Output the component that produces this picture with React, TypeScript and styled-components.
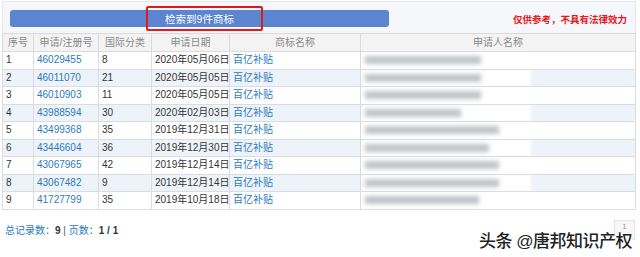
import { createGlobalStyle, styled } from "styled-components";

const GlobalStyle = createGlobalStyle`
  body {
    margin: 0;
    background: #fff;
    font-family: "Liberation Sans", "Noto Sans CJK SC", sans-serif;
    font-size: 10.5px;
    color: #333;
  }
`;

type Row = {
  no: number;
  reg: string;
  cls: string;
  date: string;
  blur: number;
};

const rows: Row[] = [
  { no: 1, reg: "46029455", cls: "8", date: "2020年05月06日", blur: 116 },
  { no: 2, reg: "46011070", cls: "21", date: "2020年05月05日", blur: 116 },
  { no: 3, reg: "46010903", cls: "11", date: "2020年05月05日", blur: 116 },
  { no: 4, reg: "43988594", cls: "30", date: "2020年02月03日", blur: 96 },
  { no: 5, reg: "43499368", cls: "35", date: "2019年12月31日", blur: 134 },
  { no: 6, reg: "43446604", cls: "36", date: "2019年12月30日", blur: 124 },
  { no: 7, reg: "43067965", cls: "42", date: "2019年12月14日", blur: 134 },
  { no: 8, reg: "43067482", cls: "9", date: "2019年12月14日", blur: 134 },
  { no: 9, reg: "41727799", cls: "35", date: "2019年10月18日", blur: 114 },
];

export default function App() {
  return (
    <>
      <GlobalStyle />
      <Page>
        <TopBar>
          <ResultBar>
            检索到9件商标
            <Highlight />
          </ResultBar>
          <Notice>仅供参考，不具有法律效力</Notice>
        </TopBar>
        <Table>
          <colgroup>
            <col style={{ width: 31 }} />
            <col style={{ width: 65 }} />
            <col style={{ width: 53 }} />
            <col style={{ width: 78 }} />
            <col style={{ width: 131 }} />
            <col />
          </colgroup>
          <thead>
            <tr>
              <Th>序号</Th>
              <Th>申请/注册号</Th>
              <Th>国际分类</Th>
              <Th>申请日期</Th>
              <Th>商标名称</Th>
              <Th>申请人名称</Th>
            </tr>
          </thead>
          <tbody>
            {rows.map((r) => (
              <Tr key={r.no} $alt={r.no % 2 === 0}>
                <Td>{r.no}</Td>
                <Td>
                  <Link>{r.reg}</Link>
                </Td>
                <Td>{r.cls}</Td>
                <Td>{r.date}</Td>
                <Td>
                  <Link>百亿补贴</Link>
                </Td>
                <Td>
                  <Mask>
                    <Smudge style={{ width: r.blur }} />
                  </Mask>
                </Td>
              </Tr>
            ))}
          </tbody>
        </Table>
        <Footer>
          总记录数：<Num>9</Num> <Sep>|</Sep> 页数：<Num>1 / 1</Num>
        </Footer>
        <PageTag>1</PageTag>
        <Watermark>头条 @唐邦知识产权</Watermark>
      </Page>
    </>
  );
}

const Page = styled.div`
  position: relative;
  width: 640px;
  height: 257px;
  padding: 1px 4px 0 2px;
  box-sizing: border-box;
`;

const TopBar = styled.div`
  display: flex;
  align-items: center;
  justify-content: space-between;
  height: 31px;
  padding: 0 8px 0 7px;
  background: #f5f7fa;
  border: 1px solid #e4e8ee;
  border-bottom: none;
`;

const ResultBar = styled.div`
  position: relative;
  width: 379px;
  height: 17px;
  margin-top: 2px;
  background: #5b85cf;
  border-radius: 3px;
  color: #fff;
  font-size: 10.5px;
  display: flex;
  justify-content: center;
  align-items: center;
`;

const Highlight = styled.div`
  position: absolute;
  left: 136px;
  top: -4px;
  box-sizing: border-box;
  width: 117px;
  height: 25px;
  border: 2px solid #e0191b;
  border-radius: 2px;
`;

const Notice = styled.div`
  color: #e8141a;
  font-weight: bold;
  font-size: 9.5px;
  margin-top: 2px;
`;

const Table = styled.table`
  width: 634px;
  border-collapse: collapse;
  table-layout: fixed;
`;

const Th = styled.th`
  height: 17px;
  padding: 0;
  background: #f3f3f3;
  border: 1px solid #dadada;
  color: #8a8a8a;
  font-weight: normal;
  font-size: 10px;
  text-align: center;
  line-height: 16px;
  white-space: nowrap;
`;

const Tr = styled.tr<{ $alt: boolean }>`
  background: ${(p) => (p.$alt ? "#eef3f9" : "#fff")};
`;

const Td = styled.td`
  height: 16.5px;
  padding: 0 0 0 3px;
  border: 1px solid #d8dde3;
  font-size: 10px;
  line-height: 16px;
  white-space: nowrap;
`;

const Link = styled.span`
  color: #2b7bc2;
`;

const Mask = styled.div`
  width: 164px;
  height: 14px;
  margin-left: -1px;
  background: #fff;
  display: flex;
  align-items: center;
  padding-left: 2px;
  box-shadow: 0 0 3px 2px rgba(255, 255, 255, 0.9);
`;

const Smudge = styled.div`
  height: 8px;
  background: #adb0b4;
  filter: blur(2px);
  opacity: 0.75;
`;

const Footer = styled.div`
  margin-top: 12px;
  padding-left: 3px;
  color: #2b7bc2;
  font-size: 10px;
`;

const Num = styled.b`
  color: #333;
`;

const Sep = styled.span`
  color: #555;
`;

const PageTag = styled.div`
  position: absolute;
  right: 5px;
  top: 220px;
  width: 19px;
  height: 18px;
  border: 1px solid #e4e4e4;
  background: #f7f7f7;
  color: #999;
  font-size: 8px;
  text-align: center;
  line-height: 12px;
`;

const Watermark = styled.div`
  position: absolute;
  right: 8px;
  top: 227px;
  font-size: 17px;
  font-weight: 500;
  color: #222;
  letter-spacing: -0.5px;
  text-shadow: 0 0 2px #fff, 0 0 2px #fff, 1px 1px 0 #fff, -1px -1px 0 #fff;
`;
